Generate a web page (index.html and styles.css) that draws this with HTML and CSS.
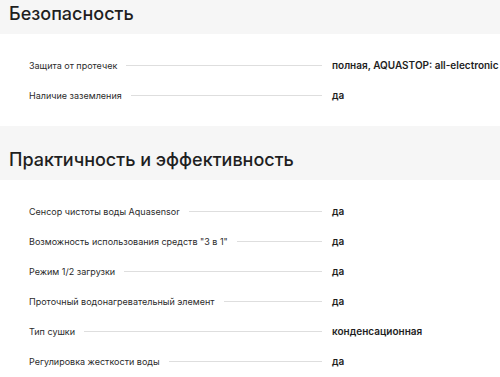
FILE: index.html
```html
<!DOCTYPE html>
<html lang="ru">
<head>
<meta charset="utf-8">
<link rel="stylesheet" href="styles.css">
</head>
<body>
<div class="page">
  <section class="group">
    <h2 class="group-title group-title--cut">Безопасность</h2>
    <div class="rows">
      <div class="row"><span class="label">Защита от протечек</span><span class="dots"></span><span class="value">полная, AQUASTOP: all-electronic</span></div>
      <div class="row"><span class="label">Наличие заземления</span><span class="dots"></span><span class="value">да</span></div>
    </div>
  </section>
  <section class="group">
    <h2 class="group-title">Практичность и эффективность</h2>
    <div class="rows">
      <div class="row"><span class="label">Сенсор чистоты воды Aquasensor</span><span class="dots"></span><span class="value">да</span></div>
      <div class="row"><span class="label">Возможность использования средств "3 в 1"</span><span class="dots"></span><span class="value">да</span></div>
      <div class="row"><span class="label">Режим 1/2 загрузки</span><span class="dots"></span><span class="value">да</span></div>
      <div class="row"><span class="label">Проточный водонагревательный элемент</span><span class="dots"></span><span class="value">да</span></div>
      <div class="row"><span class="label">Тип сушки</span><span class="dots"></span><span class="value">конденсационная</span></div>
      <div class="row"><span class="label">Регулировка жесткости воды</span><span class="dots"></span><span class="value">да</span></div>
    </div>
  </section>
</div>
</body>
</html>
```
FILE: styles.css
```css
html, body {
  margin: 0;
  padding: 0;
  background: #ffffff;
  overflow: hidden;
}
.page {
  font-family: Inter, "Noto Sans", sans-serif;
  color: #222;
  width: 500px;
}
.group-title {
  margin: 0;
  background: #f6f6f6;
  height: 54px;
  box-sizing: border-box;
  padding: 22px 0 0 9px;
  font-size: 18px;
  font-weight: 500;
  line-height: 23px;
  color: #1f1f1f;
  white-space: nowrap;
}
.group-title--cut {
  height: 34px;
  padding-top: 2px;
}
.rows {
  padding: 16px 0 16px 29px;
}
.row {
  display: flex;
  align-items: center;
  height: 30px;
  white-space: nowrap;
}
.label {
  font-size: 9px;
  color: #2b2b2b;
}
.dots {
  flex: 1;
  height: 1px;
  background: #dedede;
  margin: 0 10px 0 9px;
}
.value {
  width: 168px;
  flex: none;
  font-size: 10px;
  font-weight: 600;
  color: #1e1e1e;
}
```
